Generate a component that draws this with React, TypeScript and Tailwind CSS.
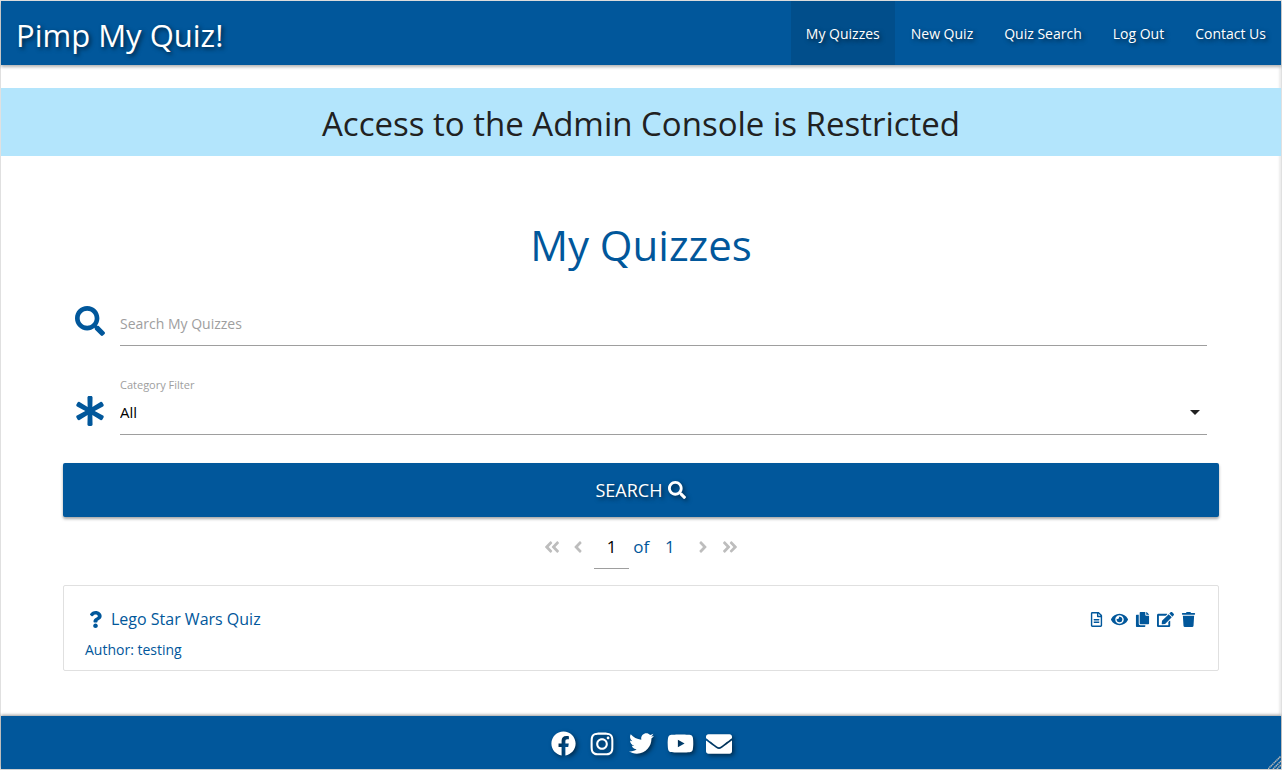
import { useState } from "react";
import type { ReactNode } from "react";
import {
  FaAngleDoubleLeft,
  FaAngleDoubleRight,
  FaAngleLeft,
  FaAngleRight,
  FaAsterisk,
  FaCopy,
  FaEdit,
  FaEnvelope,
  FaEye,
  FaFacebook,
  FaInstagram,
  FaQuestion,
  FaRegFileAlt,
  FaSearch,
  FaTrash,
  FaTwitter,
  FaYoutube,
} from "react-icons/fa";

const navItems = ["My Quizzes", "New Quiz", "Quiz Search", "Log Out", "Contact Us"];

const socialLinks: { label: string; icon: ReactNode }[] = [
  { label: "Facebook", icon: <FaFacebook size={25} /> },
  { label: "Instagram", icon: <FaInstagram size={26} /> },
  { label: "Twitter", icon: <FaTwitter size={25} /> },
  { label: "YouTube", icon: <FaYoutube size={27} /> },
  { label: "Email", icon: <FaEnvelope size={26} /> },
];

const quizActions: { label: string; icon: ReactNode }[] = [
  { label: "Take quiz", icon: <FaRegFileAlt size={15} /> },
  { label: "View quiz", icon: <FaEye size={17} /> },
  { label: "Copy quiz", icon: <FaCopy size={15} /> },
  { label: "Edit quiz", icon: <FaEdit size={17} /> },
  { label: "Delete quiz", icon: <FaTrash size={15} /> },
];

function Header() {
  return (
    <header className="relative bg-[#01579b] text-white shadow-[0_2px_3px_rgba(0,0,0,0.3)]">
      <nav className="flex h-16 items-center justify-between">
        <a href="#" className="pt-1 pl-[15px] text-[31px] whitespace-nowrap [text-shadow:2px_2px_4px_rgba(0,0,0,0.6)]">
          Pimp My Quiz!
        </a>
        <ul className="flex h-full gap-px">
          {navItems.map((item, i) => (
            <li key={item}>
              <a
                href="#"
                className={`flex h-full items-center px-[15px] pt-0.5 text-sm whitespace-nowrap [text-shadow:2px_2px_4px_rgba(0,0,0,0.6)] ${
                  i === 0 ? "bg-[#014e8b]" : ""
                }`}
              >
                {item}
              </a>
            </li>
          ))}
        </ul>
      </nav>
    </header>
  );
}

function SearchForm() {
  const [query, setQuery] = useState("");
  return (
    <form onSubmit={(e) => e.preventDefault()}>
      <div className="flex gap-[15px] px-3">
        <label htmlFor="query" aria-label="Search My Quizzes" className="flex h-10 w-[30px] items-center text-[#01579b]">
          <FaSearch size={30} />
        </label>
        <input
          id="query"
          type="text"
          value={query}
          onChange={(e) => setQuery(e.target.value)}
          placeholder="Search My Quizzes"
          className="h-[45px] min-w-0 flex-1 border-b border-[#9e9e9e] bg-transparent text-sm text-black outline-none placeholder:text-[#9e9e9e]"
        />
      </div>
      <div className="mt-[33px] flex items-end gap-[15px] px-3">
        <div className="flex h-12 w-[30px] items-center text-[#01579b]">
          <FaAsterisk size={30} />
        </div>
        <div className="flex min-w-0 flex-1 flex-col">
          <label htmlFor="category" className="text-[11px] leading-3 text-[#9e9e9e]">
            Category Filter
          </label>
          <div className="grid items-center border-b border-[#9e9e9e]">
            <select
              id="category"
              className="col-start-1 row-start-1 h-[43px] w-full appearance-none bg-transparent text-[15px] text-black outline-none"
            >
              <option>All</option>
            </select>
            <svg
              viewBox="0 0 10 5"
              className="pointer-events-none col-start-1 row-start-1 mr-[7px] h-[5px] w-[10px] justify-self-end fill-[#212121]"
            >
              <path d="M0 0h10L5 5z" />
            </svg>
          </div>
        </div>
      </div>
      <button
        type="submit"
        className="mt-7 flex h-[54px] w-full items-center justify-center gap-[6px] rounded-xs bg-[#01579b] text-[18px] text-white shadow-[0_2px_3px_rgba(0,0,0,0.35)] [text-shadow:2px_2px_4px_rgba(0,0,0,0.6)]"
      >
        SEARCH
        <FaSearch size={18} className="drop-shadow-[2px_2px_2px_rgba(0,0,0,0.5)]" />
      </button>
    </form>
  );
}

function Pagination() {
  return (
    <nav aria-label="Pages" className="flex h-[52px] items-center justify-center pt-2 text-[17px] text-[#01579b]">
      <button type="button" aria-label="First page" className="w-[17px] text-[#bdbdbd]">
        <FaAngleDoubleLeft size={18} />
      </button>
      <button type="button" aria-label="Previous page" className="ml-2 flex w-5 justify-center text-[#bdbdbd]">
        <FaAngleLeft size={18} />
      </button>
      <input
        type="text"
        aria-label="Current page"
        defaultValue="1"
        className="ml-[6px] h-11 w-[35px] border-b border-[#9e9e9e] bg-transparent text-center text-black outline-none"
      />
      <span className="ml-1">of</span>
      <span className="ml-4">1</span>
      <button type="button" aria-label="Next page" className="ml-[18px] flex w-5 justify-center text-[#bdbdbd]">
        <FaAngleRight size={18} />
      </button>
      <button type="button" aria-label="Last page" className="ml-2 text-[#bdbdbd]">
        <FaAngleDoubleRight size={18} />
      </button>
    </nav>
  );
}

function QuizCard() {
  return (
    <article className="mt-4 flex h-[86px] items-start justify-between rounded-xs border border-[#e0e0e0] px-[21px] pt-5 text-[#01579b]">
      <div>
        <h2 className="flex h-[26px] items-center">
          <FaQuestion size={17} className="mr-[7px] ml-0.5" />
          <a href="#" className="text-base">
            Lego Star Wars Quiz
          </a>
        </h2>
        <p className="mt-2 text-sm leading-5">Author: testing</p>
      </div>
      <div className="flex h-[26px] items-center gap-[6px]">
        {quizActions.map((action) => (
          <button key={action.label} type="button" aria-label={action.label} className="flex w-[17px] justify-center">
            {action.icon}
          </button>
        ))}
      </div>
    </article>
  );
}

function Footer() {
  return (
    <footer className="relative mt-auto flex h-[53px] items-center justify-center gap-3 bg-[#01579b] pt-0.5 text-white shadow-[0_-1px_3px_rgba(0,0,0,0.4)]">
      {socialLinks.map((link) => (
        <a
          key={link.label}
          href="#"
          aria-label={link.label}
          className="flex w-[27px] justify-center drop-shadow-[2px_2px_2px_rgba(0,0,0,0.5)]"
        >
          {link.icon}
        </a>
      ))}
      <svg viewBox="0 0 13 13" className="absolute right-0 bottom-0 size-[13px] stroke-[#b5b5b5]" strokeWidth="1.5" strokeDasharray="1.5 0.5">
        <path d="M0 13L13 0M5 13l8-8M9 13l4-4" fill="none" />
      </svg>
    </footer>
  );
}

export default function App() {
  return (
    <div className="flex min-h-screen flex-col border border-[#e0e0e0] bg-white font-['Open_Sans','Noto_Sans',sans-serif] shadow-[inset_-2px_0_2px_rgba(0,0,0,0.08)]">
      <Header />
      <p className="mt-[23px] flex h-[68px] items-center justify-center bg-[#b3e5fc] pt-1 text-center text-[33px] text-[#212121]">
        Access to the Admin Console is Restricted
      </p>
      <main className="px-[62px] pb-11">
        <h1 className="pt-[62px] pb-[29px] text-center text-[42px] leading-[54px] text-[#01579b]">My Quizzes</h1>
        <SearchForm />
        <Pagination />
        <QuizCard />
      </main>
      <Footer />
    </div>
  );
}
